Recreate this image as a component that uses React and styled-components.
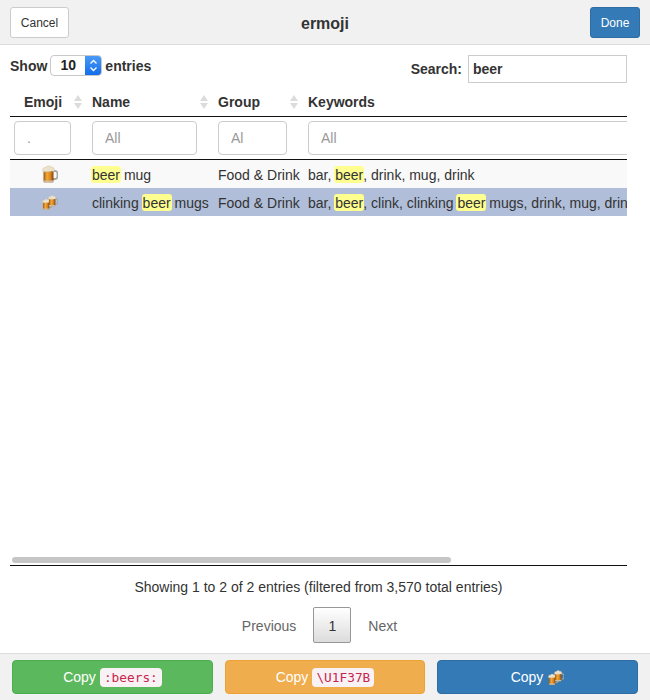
import React from "react";
import styled, { createGlobalStyle } from "styled-components";

const Global = createGlobalStyle`
  html, body { margin: 0; padding: 0; background: #fff; }
  * { box-sizing: border-box; }
  body { font-family: "Liberation Sans", Arial, sans-serif; font-size: 14px; color: #333; }
`;

const Page = styled.div`
  width: 650px;
  height: 700px;
  display: flex;
  flex-direction: column;
  overflow: hidden;
`;

const Header = styled.header`
  height: 45px;
  flex: none;
  display: grid;
  grid-template-columns: 1fr auto 1fr;
  align-items: start;
  padding: 7px 10px 0;
  background: #f1f1f1;
  border-bottom: 1px solid #ddd;
`;

const Title = styled.h1`
  margin: 0;
  padding-top: 7px;
  font-size: 16px;
  line-height: 20px;
  font-weight: 700;
  color: #333;
`;

const HeaderButton = styled.button`
  height: 31px;
  width: ${(p) => p.$width}px;
  padding: 0;
  border-radius: 3px;
  font: 12px "Liberation Sans", Arial, sans-serif;
  border: 1px solid ${(p) => (p.$primary ? "#2e6da4" : "#ccc")};
  background: ${(p) => (p.$primary ? "#337ab7" : "#fff")};
  color: ${(p) => (p.$primary ? "#fff" : "#333")};
  justify-self: ${(p) => (p.$primary ? "end" : "start")};
`;

const Content = styled.main`
  flex: 1;
  min-height: 0;
  display: flex;
  flex-direction: column;
  padding: 0 23px 0 10px;
`;

const Controls = styled.div`
  height: 43px;
  flex: none;
  display: flex;
  justify-content: space-between;
  align-items: flex-start;
  padding-top: 10px;
  font-weight: 700;
`;

const Label = styled.label`
  display: flex;
  align-items: center;
  gap: ${(p) => p.$gap}px;
  height: ${(p) => p.$height}px;
`;

const FakeSelect = styled.span`
  width: 52px;
  height: 21px;
  display: flex;
  border: 1px solid #c9c9c9;
  border-radius: 4px;
  overflow: hidden;
  background: #fff;
  color: #222;
`;

const SelectValue = styled.span`
  flex: 1;
  text-align: center;
  font-size: 14px;
  line-height: 19px;
  font-weight: 700;
`;

const SelectArrows = styled.span`
  width: 17px;
  margin: -1px -1px -1px 0;
  display: flex;
  align-items: center;
  justify-content: center;
  background: linear-gradient(#4c9cf8, #0f6be8);
`;

const SearchInput = styled.input`
  width: 159px;
  height: 28px;
  border: 1px solid #ccc;
  padding: 0 4px;
  font: 700 14px "Liberation Sans", Arial, sans-serif;
  color: #333;
  outline: none;
`;

const TableScroll = styled.div`
  flex: 1;
  min-height: 0;
  overflow: hidden;
`;

const Table = styled.table`
  width: 760px;
  table-layout: fixed;
  border-collapse: separate;
  border-spacing: 0;
`;

const HeadCell = styled.th`
  position: relative;
  height: 29px;
  padding: 0 0 0 ${(p) => p.$pad}px;
  text-align: left;
  font-weight: 700;
  color: #333;
  border-bottom: 1px solid #111;
`;

const SortIcon = styled.svg`
  position: absolute;
  top: 7px;
  left: ${(p) => p.$left}px;
`;

const FilterCell = styled.td`
  height: 43px;
  padding: 4px 11px 4px ${(p) => p.$pad}px;
  border-bottom: 1px solid #111;
`;

const FilterInput = styled.input`
  display: block;
  width: 100%;
  height: 34px;
  padding: 0 12px;
  border: 1px solid #ccc;
  border-radius: 4px;
  font: 14px "Liberation Sans", Arial, sans-serif;
  outline: none;
  &::placeholder { color: #999; opacity: 1; }
`;

const Row = styled.tr`
  background: ${(p) => (p.$selected ? "#b0bed9" : "#f9f9f9")};
`;

const Cell = styled.td`
  height: 28px;
  padding: 1px 0 0 10px;
  white-space: nowrap;
  color: #333;
`;

const EmojiCell = styled.td`
  height: 28px;
  padding: 0 0 0 8px;
`;

const Mark = styled.mark`
  background: #ffff8f;
  color: inherit;
  padding: 1px 1px 0;
  margin: 0 -1px;
  border-radius: 3px;
`;

const ScrollTrack = styled.div`
  flex: none;
  height: 10px;
  padding: 1px 2px 2px;
  border-bottom: 1px solid #111;
`;

const ScrollThumb = styled.div`
  width: 439px;
  height: 6px;
  border-radius: 3px;
  background: #c6c6c6;
`;

const Info = styled.div`
  flex: none;
  margin-top: 12px;
  height: 18px;
  line-height: 18px;
  text-align: center;
`;

const Pagination = styled.nav`
  flex: none;
  height: 36px;
  margin: 11px 0 10px;
  display: flex;
  justify-content: center;
  align-items: center;
  padding-left: 2px;
`;

const PageLink = styled.span`
  color: #666;
  padding: 1px 17px 0;
`;

const PageCurrent = styled.span`
  width: 38px;
  height: 36px;
  padding-top: 1px;
  border: 1px solid #979797;
  border-radius: 2px;
  background: linear-gradient(#fff, #dcdcdc);
  color: #333;
  display: flex;
  align-items: center;
  justify-content: center;
`;

const Footer = styled.footer`
  flex: none;
  height: 47px;
  display: grid;
  grid-template-columns: 201px 200px 201px;
  gap: 12px;
  padding: 6px 12px 6px;
  background: #f1f1f1;
  border-top: 1px solid #ddd;
`;

const CopyButton = styled.button`
  height: 34px;
  padding: 0;
  border-radius: 4px;
  border: 1px solid ${(p) => p.$border};
  background: ${(p) => p.$bg};
  color: #fff;
  font: 14px "Liberation Sans", Arial, sans-serif;
  display: flex;
  align-items: center;
  justify-content: center;
  gap: 4px;
`;

const Code = styled.code`
  font: 12.8px "DejaVu Sans Mono", monospace;
  color: #c7254e;
  background: #f9f2f4;
  border-radius: 4px;
  padding: 2px 4px;
  line-height: 15px;
`;

const EmojiSvg = styled.svg`
  display: block;
  margin: ${(p) => (p.$inline ? "0 0 0 1px" : "0 auto")};
`;

const Sort = ({ left }) => (
  <SortIcon $left={left} width="8" height="14" viewBox="0 0 8 14">
    <path d="M4 0 8 6H0zM4 14 0 8h8z" fill="#dcdcdc" />
  </SortIcon>
);

const Gradients = () => (
  <defs>
    <linearGradient id="beer" x1="0" x2="1" y1="0" y2="0">
      <stop offset="0" stopColor="#9c5410" />
      <stop offset="0.35" stopColor="#f2ab3a" />
      <stop offset="0.7" stopColor="#d9831c" />
      <stop offset="1" stopColor="#7d4310" />
    </linearGradient>
  </defs>
);

const Mug = ({ x = 0, y = 0, scale = 1 }) => (
  <g transform={`translate(${x} ${y}) scale(${scale})`}>
    <path d="M10.500 6h2.500A2.500 2.500 0 0 1 15.500 8.500v3A2.500 2.500 0 0 1 13 14h-2.500" fill="none" stroke="#a9a69f" strokeWidth="1.800" />
    <rect x="1.500" y="3" width="10" height="14.500" rx="1.500" fill="url(#beer)" />
    <path d="M1.500 15.500h10v.500a1.500 1.500 0 0 1-1.500 1.500H3A1.500 1.500 0 0 1 1.500 16z" fill="#c9bda8" />
    <path d="M1 6.500c-1-2.800.8-4.600 2.800-4 1-2 4.200-2.200 5.400-.3 2-.5 3.800 1.400 2.800 4.100-.8.400-1.500-.3-2.300-.2-1 .1-1.800.9-2.800.5-1.500-.5-4.600.8-5.900-.1z" fill="#ece2cb" stroke="#cbbf9f" strokeWidth=".5" />
  </g>
);

const BeerMug = () => (
  <EmojiSvg width="16" height="18" viewBox="0 0 16 18">
    <Gradients />
    <Mug />
  </EmojiSvg>
);

const BeerMugs = ({ inline }) => (
  <EmojiSvg $inline={inline} width="16" height="16" viewBox="0 0 16 16">
    <Gradients />
    <Mug x={0} y={4.500} scale={0.64} />
    <Mug x={6} y={1} scale={0.64} />
  </EmojiSvg>
);

const UpDown = () => (
  <svg width="9" height="15" viewBox="0 0 9 15">
    <path d="M1.500 5.500 4.500 2.500 7.500 5.500M1.500 9.500 4.500 12.500 7.500 9.500" fill="none" stroke="#fff" strokeWidth="1.300" />
  </svg>
);

export default function App() {
  return (
    <Page>
      <Global />
      <Header>
        <HeaderButton $width={59}>Cancel</HeaderButton>
        <Title>ermoji</Title>
        <HeaderButton $width={50} $primary>Done</HeaderButton>
      </Header>
      <Content>
        <Controls>
          <Label $gap={3} $height={21}>
            Show
            <FakeSelect>
              <SelectValue>10</SelectValue>
              <SelectArrows><UpDown /></SelectArrows>
            </FakeSelect>
            entries
          </Label>
          <Label $gap={6} $height={28}>
            Search:
            <SearchInput defaultValue="beer" />
          </Label>
        </Controls>
        <TableScroll>
          <Table>
            <colgroup>
              <col style={{ width: 72 }} />
              <col style={{ width: 126 }} />
              <col style={{ width: 90 }} />
              <col />
            </colgroup>
            <thead>
              <tr>
                <HeadCell $pad={14}>Emoji<Sort left={64} /></HeadCell>
                <HeadCell $pad={10}>Name<Sort left={118} /></HeadCell>
                <HeadCell $pad={10}>Group<Sort left={82} /></HeadCell>
                <HeadCell $pad={10}>Keywords</HeadCell>
              </tr>
              <tr>
                <FilterCell $pad={4}><FilterInput placeholder="." /></FilterCell>
                <FilterCell $pad={10}><FilterInput placeholder="All" /></FilterCell>
                <FilterCell $pad={10}><FilterInput placeholder="Al" /></FilterCell>
                <FilterCell $pad={10}><FilterInput placeholder="All" /></FilterCell>
              </tr>
            </thead>
            <tbody>
              <Row>
                <EmojiCell><BeerMug /></EmojiCell>
                <Cell><Mark>beer</Mark> mug</Cell>
                <Cell>Food &amp; Drink</Cell>
                <Cell>bar, <Mark>beer</Mark>, drink, mug, drink</Cell>
              </Row>
              <Row $selected>
                <EmojiCell><BeerMugs /></EmojiCell>
                <Cell>clinking <Mark>beer</Mark> mugs</Cell>
                <Cell>Food &amp; Drink</Cell>
                <Cell>bar, <Mark>beer</Mark>, clink, clinking <Mark>beer</Mark> mugs, drink, mug, drink</Cell>
              </Row>
            </tbody>
          </Table>
        </TableScroll>
        <ScrollTrack><ScrollThumb /></ScrollTrack>
        <Info>Showing 1 to 2 of 2 entries (filtered from 3,570 total entries)</Info>
        <Pagination>
          <PageLink>Previous</PageLink>
          <PageCurrent>1</PageCurrent>
          <PageLink>Next</PageLink>
        </Pagination>
      </Content>
      <Footer>
        <CopyButton $bg="#5cb85c" $border="#4cae4c">Copy <Code>:beers:</Code></CopyButton>
        <CopyButton $bg="#f0ad4e" $border="#eea236">Copy <Code>\U1F37B</Code></CopyButton>
        <CopyButton $bg="#337ab7" $border="#2e6da4">Copy <BeerMugs inline /></CopyButton>
      </Footer>
    </Page>
  );
}
